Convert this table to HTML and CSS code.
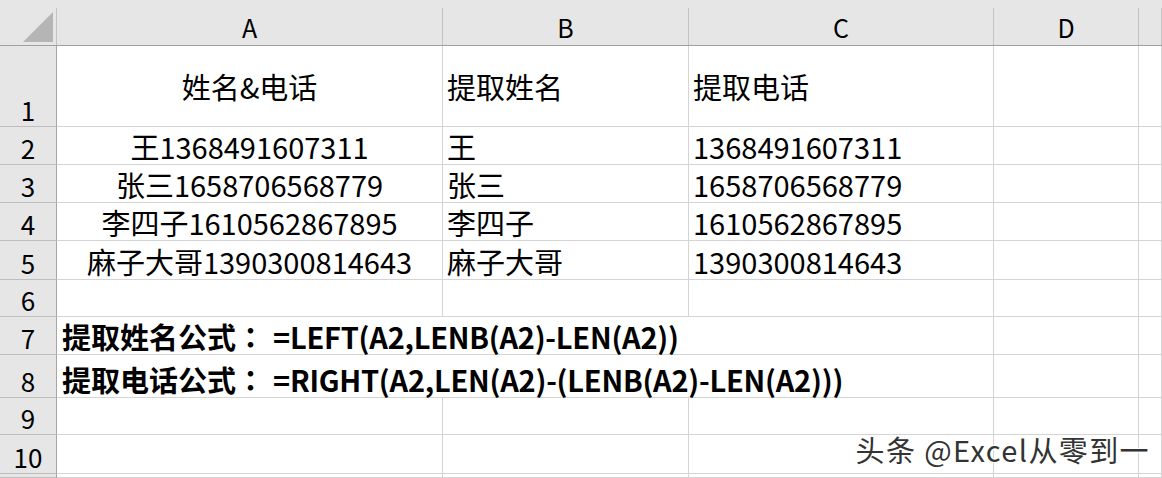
FILE: index.html
```html
<!DOCTYPE html>
<html lang="zh-CN">
<head>
<meta charset="utf-8">
<title>Excel</title>
<link rel="stylesheet" href="styles.css">
</head>
<body>
<div class="sheet">
  <div class="corner"><svg class="tri" width="30" height="30" viewBox="0 0 30 30"><polygon points="30,0 30,30 0,30" fill="#b5b5b5"/></svg></div>
  <div class="colhead">A</div>
  <div class="colhead">B</div>
  <div class="colhead">C</div>
  <div class="colhead">D</div>
  <div class="colhead"></div>

  <div class="rowhead">1</div>
  <div class="cell mid center">姓名&amp;电话</div>
  <div class="cell mid">提取姓名</div>
  <div class="cell mid">提取电话</div>
  <div class="cell"></div>
  <div class="cell"></div>

  <div class="rowhead">2</div>
  <div class="cell center">王1368491607311</div>
  <div class="cell">王</div>
  <div class="cell">1368491607311</div>
  <div class="cell"></div>
  <div class="cell"></div>

  <div class="rowhead">3</div>
  <div class="cell center">张三1658706568779</div>
  <div class="cell">张三</div>
  <div class="cell">1658706568779</div>
  <div class="cell"></div>
  <div class="cell"></div>

  <div class="rowhead">4</div>
  <div class="cell center">李四子1610562867895</div>
  <div class="cell">李四子</div>
  <div class="cell">1610562867895</div>
  <div class="cell"></div>
  <div class="cell"></div>

  <div class="rowhead">5</div>
  <div class="cell center">麻子大哥1390300814643</div>
  <div class="cell">麻子大哥</div>
  <div class="cell">1390300814643</div>
  <div class="cell"></div>
  <div class="cell"></div>

  <div class="rowhead">6</div>
  <div class="cell"></div>
  <div class="cell"></div>
  <div class="cell"></div>
  <div class="cell"></div>
  <div class="cell"></div>

  <div class="rowhead">7</div>
  <div class="cell span3 bold">提取姓名公式<span class="colon">：</span><span class="formula">=LEFT(A2,LENB(A2)-LEN(A2))</span></div>
  <div class="cell"></div>
  <div class="cell"></div>

  <div class="rowhead">8</div>
  <div class="cell span3 bold">提取电话公式<span class="colon">：</span><span class="formula">=RIGHT(A2,LEN(A2)-(LENB(A2)-LEN(A2)))</span></div>
  <div class="cell"></div>
  <div class="cell"></div>

  <div class="rowhead">9</div>
  <div class="cell"></div>
  <div class="cell"></div>
  <div class="cell"></div>
  <div class="cell"></div>
  <div class="cell"></div>

  <div class="rowhead">10</div>
  <div class="cell"></div>
  <div class="cell"></div>
  <div class="cell"></div>
  <div class="cell"></div>
  <div class="cell"></div>

  <div class="rowhead"></div>
  <div class="cell"></div>
  <div class="cell"></div>
  <div class="cell"></div>
  <div class="cell"></div>
  <div class="cell"></div>
</div>
<div class="watermark">头条 @Excel从零到一</div>
</body>
</html>
```
FILE: styles.css
```css
html, body {
  margin: 0;
  padding: 0;
  background: #ffffff;
  overflow: hidden;
}

body {
  width: 1162px;
  height: 478px;
  position: relative;
  font-family: "Noto Sans CJK SC", "Noto Sans", sans-serif;
  color: #000;
}

.sheet {
  display: grid;
  grid-template-columns: 57px 386px 246px 305px 145px 1fr;
  grid-template-rows: 46px 81px 38px 38px 38px 39px 37px 38px 43px 37px 39px 1fr;
  width: 1162px;
  height: 478px;
  overflow: hidden;
}

.corner,
.colhead {
  box-sizing: border-box;
  background:
    linear-gradient(#c4c4c4, #c4c4c4) right bottom / 1px calc(100% - 8px) no-repeat,
    #e6e6e6;
  border-bottom: 1px solid #a0a0a0;
}

.corner {
  display: flex;
  justify-content: flex-end;
  align-items: flex-end;
  padding: 0 4px 3px 0;
}

.tri {
  display: block;
}

.colhead {
  display: flex;
  justify-content: center;
  align-items: flex-end;
  font-size: 25px;
  line-height: 25px;
  padding-bottom: 5px;
  padding-right: 1px;
}

.rowhead {
  box-sizing: border-box;
  background: #e6e6e6;
  border-right: 1px solid #a6a6a6;
  border-bottom: 1px solid #bebebe;
  display: flex;
  justify-content: center;
  align-items: flex-end;
  font-size: 26px;
  line-height: 26px;
  padding-bottom: 3px;
}

.cell {
  box-sizing: border-box;
  border-right: 1px solid #d4d4d4;
  border-bottom: 1px solid #d4d4d4;
  display: flex;
  align-items: flex-end;
  font-size: 29px;
  line-height: 29px;
  padding: 0 0 3px 4px;
  white-space: nowrap;
}

.cell.center {
  justify-content: center;
  padding-left: 0;
}

.cell.mid {
  align-items: center;
  padding-bottom: 0;
}

.cell.span3 {
  grid-column: span 3;
}

.cell.bold {
  font-weight: 700;
  padding-left: 5px;
  padding-bottom: 3px;
}

.colon {
  font-family: "Noto Sans CJK TC", "Noto Sans CJK SC", sans-serif;
  padding-right: 8px;
}

.formula {
  letter-spacing: -0.25px;
}

.watermark {
  position: absolute;
  right: 12px;
  bottom: 13px;
  font-size: 29px;
  line-height: 32px;
  letter-spacing: 1.4px;
  color: #333333;
  white-space: nowrap;
  text-shadow: 1px 1px 0 #fff, -1px -1px 0 #fff, 1px -1px 0 #fff, -1px 1px 0 #fff;
}
```
